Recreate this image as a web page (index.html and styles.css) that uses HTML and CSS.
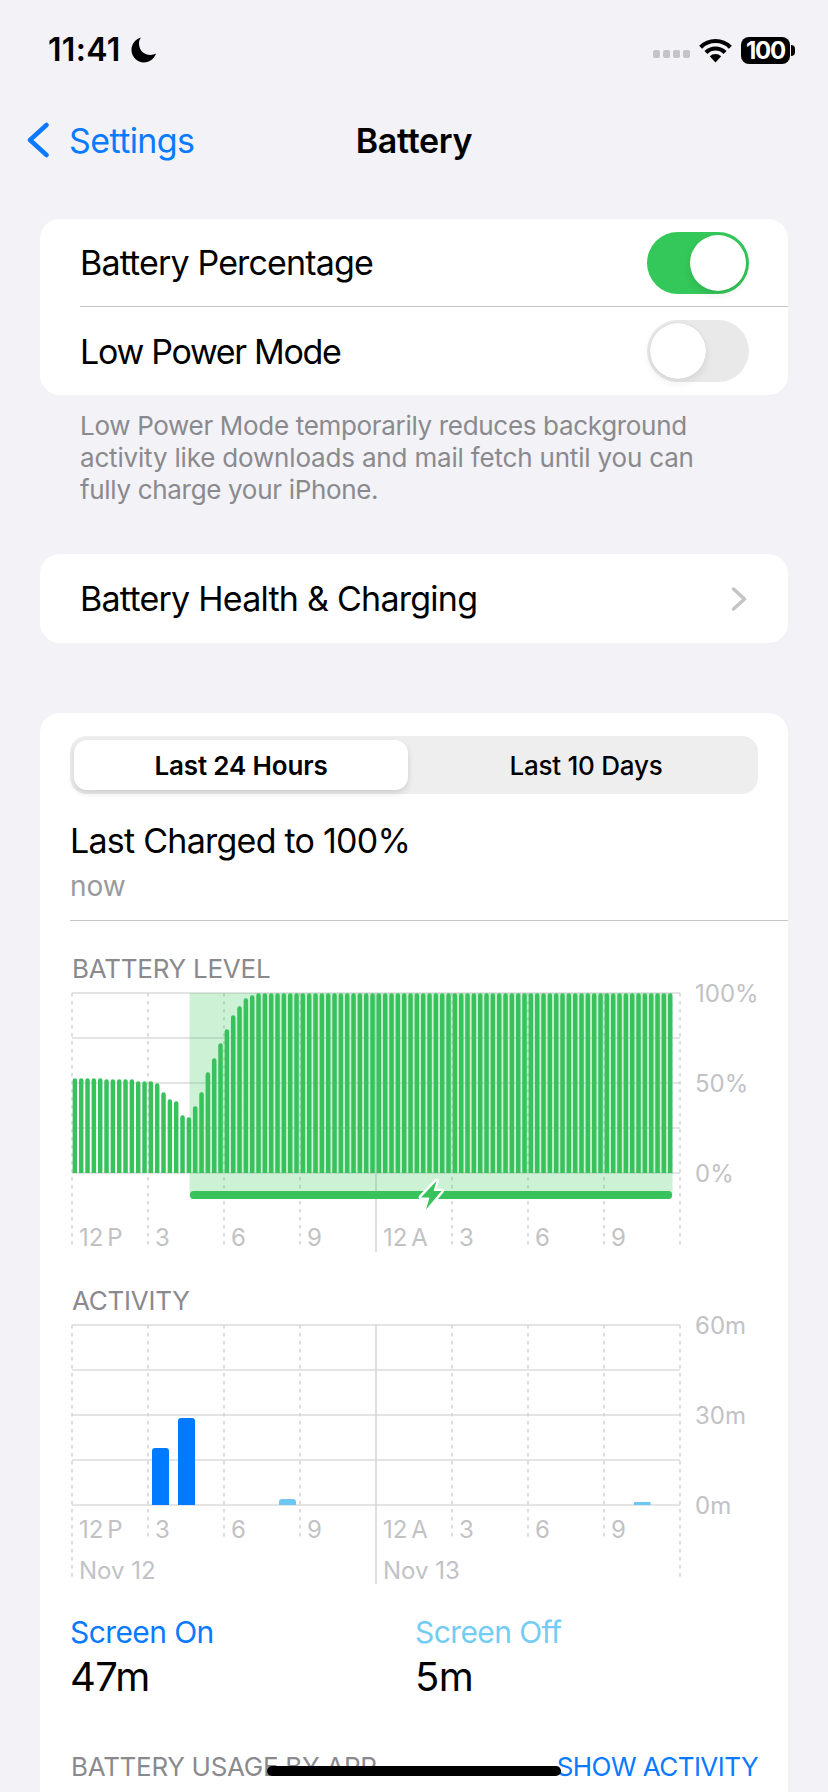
FILE: index.html
```html
<!DOCTYPE html>
<html lang="en">
<head>
<meta charset="utf-8">
<title>Battery</title>
<link rel="stylesheet" href="styles.css">
</head>
<body>
<div class="page">
  <header class="status">
    <div class="status-left">
      <span class="time">11:41</span>
      <svg class="moon" viewBox="0 0 26 26"><path d="M10 .5C4.500 2 .5 7 .5 13c0 6.500 5.500 12.500 12.500 12.500 5.500 0 10-3.500 12-9-1.500.7-3.500 1.500-5.500 1.500C12.500 18 8 13 8 6.500 8 4.300 8.700 2 10 .5z"/></svg>
    </div>
    <div class="status-right">
      <div class="signal"><i></i><i></i><i></i><i></i></div>
      <svg class="wifi" viewBox="0 0 33 25"><path class="wifi-arc" d="M1.650 9.150A21 21 0 0 1 31.350 9.150M6.950 14.450A13.500 13.500 0 0 1 26.050 14.450"/><path d="M16.500 24.500 10.800 18.300A8 8 0 0 1 22.200 18.300z"/></svg>
      <div class="battery"><span class="battery-body">100</span><span class="battery-cap"></span></div>
    </div>
  </header>

  <nav class="nav">
    <a class="back">
      <svg class="back-chevron" viewBox="0 0 24 36"><path d="M20.500 3 4 18 20.500 33"/></svg>
      <span>Settings</span>
    </a>
    <h1 class="nav-title">Battery</h1>
    <span></span>
  </nav>

  <section class="card card-toggles">
    <div class="row row-first">
      <span>Battery Percentage</span>
      <span class="toggle toggle-on"><i class="knob"></i></span>
    </div>
    <div class="row">
      <span class="label-tight">Low Power Mode</span>
      <span class="toggle toggle-off"><i class="knob"></i></span>
    </div>
  </section>
  <p class="note">Low Power Mode temporarily reduces background<br><span class="note-wide">activity like downloads and mail fetch until you can</span><br>fully charge your iPhone.</p>

  <section class="card card-health">
    <div class="row row-link">
      <span class="label-loose">Battery Health &amp; Charging</span>
      <svg class="disclosure" viewBox="0 0 16 24"><path d="M2.500 2 13.500 12 2.500 22"/></svg>
    </div>
  </section>

  <section class="card card-usage">
    <div class="segmented">
      <span class="seg seg-active">Last 24 Hours</span>
      <span class="seg seg-rest">Last 10 Days</span>
    </div>
    <div class="charged">
      <div class="charged-title">Last Charged to 100%</div>
      <div class="charged-sub">now</div>
    </div>

    <h2 class="chart-title chart-title-level">BATTERY LEVEL</h2>
    <div class="chart">
      <svg class="plot plot-level" viewBox="71 981 612 274">
        <g class="hlines"><path d="M72 993H680M72 1038H680M72 1083H680M72 1128H680M72 1173H680"/></g>
        <g class="vdash"><path d="M72 993V1248M148 993V1248M224 993V1248M300 993V1248M452 993V1248M528 993V1248M604 993V1248M680 993V1248"/></g>
        <path class="vsolid" d="M376 993V1252"/>
        <rect class="charge-shade" x="189.500" y="993" width="483" height="204"/>
        <svg x="72" y="990" width="610" height="183" viewBox="72 990 610 183">
          <path class="level-bars" d="M74.870 1080.500V1180M81.200 1080.500V1180M87.530 1080.500V1180M93.870 1080.500V1180M100.200 1080.500V1180M106.530 1081.500V1180M112.870 1081.500V1180M119.200 1081.500V1180M125.530 1081.500V1180M131.870 1081.500V1180M138.200 1083.500V1180M144.530 1083.500V1180M150.870 1083.500V1180M157.200 1085.500V1180M163.530 1094.500V1180M169.870 1101.500V1180M176.200 1103.500V1180M182.530 1117.500V1180M188.870 1119.500V1180M195.200 1108.500V1180M201.530 1094.500V1180M207.870 1074.500V1180M214.200 1060.500V1180M220.530 1045.500V1180M226.870 1031.500V1180M233.200 1017.500V1180M239.530 1008.500V1180M245.870 1000.500V1180M252.200 997.500V1180M258.530 995.500V1180M264.870 995.500V1180M271.200 995.500V1180M277.530 995.500V1180M283.870 995.500V1180M290.200 995.500V1180M296.530 995.500V1180M302.870 995.500V1180M309.200 995.500V1180M315.530 995.500V1180M321.870 995.500V1180M328.200 995.500V1180M334.530 995.500V1180M340.870 995.500V1180M347.200 995.500V1180M353.530 995.500V1180M359.870 995.500V1180M366.200 995.500V1180M372.530 995.500V1180M378.870 995.500V1180M385.200 995.500V1180M391.530 995.500V1180M397.870 995.500V1180M404.200 995.500V1180M410.530 995.500V1180M416.870 995.500V1180M423.200 995.500V1180M429.530 995.500V1180M435.870 995.500V1180M442.200 995.500V1180M448.530 995.500V1180M454.870 995.500V1180M461.200 995.500V1180M467.530 995.500V1180M473.870 995.500V1180M480.200 995.500V1180M486.530 995.500V1180M492.870 995.500V1180M499.200 995.500V1180M505.530 995.500V1180M511.870 995.500V1180M518.200 995.500V1180M524.530 995.500V1180M530.870 995.500V1180M537.200 995.500V1180M543.530 995.500V1180M549.870 995.500V1180M556.200 995.500V1180M562.530 995.500V1180M568.870 995.500V1180M575.200 995.500V1180M581.530 995.500V1180M587.870 995.500V1180M594.200 995.500V1180M600.530 995.500V1180M606.870 995.500V1180M613.200 995.500V1180M619.530 995.500V1180M625.870 995.500V1180M632.200 995.500V1180M638.530 995.500V1180M644.870 995.500V1180M651.200 995.500V1180M657.530 995.500V1180M663.870 995.500V1180M670.200 995.500V1180"/>
        </svg>
        <rect class="charge-bar" x="190" y="1191" width="482" height="8" rx="3.500"/>
        <path class="bolt" d="M436.500 1181 421 1197.500H429.500L426 1209.500 441.500 1191H433.500z"/>
      </svg>
      <div class="xlabels xlabels-level">
        <span>12 P</span><span>3</span><span>6</span><span>9</span><span>12 A</span><span>3</span><span>6</span><span>9</span>
      </div>
      <div class="ylabels"><span>100%</span><span>50%</span><span>0%</span></div>
    </div>

    <h2 class="chart-title chart-title-activity">ACTIVITY</h2>
    <div class="chart">
      <svg class="plot plot-activity" viewBox="71 1313 612 272">
        <g class="hlines"><path d="M72 1325H680M72 1370H680M72 1415H680M72 1460H680M72 1505H680"/></g>
        <g class="vdash"><path d="M72 1325V1580M148 1325V1540M224 1325V1540M300 1325V1540M452 1325V1540M528 1325V1540M604 1325V1540M680 1325V1580"/></g>
        <path class="vsolid" d="M376 1325V1584"/>
        <path class="bar-on" d="M152 1505V1451a3 3 0 0 1 3-3h11a3 3 0 0 1 3 3v54zM178 1505V1421a3 3 0 0 1 3-3h11a3 3 0 0 1 3 3v84z"/>
        <path class="bar-off" d="M279 1505V1502a3 3 0 0 1 3-3h11a3 3 0 0 1 3 3v3zM634 1505V1502h16.500v3z"/>
      </svg>
      <div class="xlabels xlabels-activity">
        <span>12 P</span><span>3</span><span>6</span><span>9</span><span>12 A</span><span>3</span><span>6</span><span>9</span>
        <span class="date">Nov 12</span><span class="date">Nov 13</span>
      </div>
      <div class="ylabels"><span>60m</span><span>30m</span><span>0m</span></div>
    </div>

    <div class="totals">
      <div class="total">
        <div class="total-label label-on">Screen On</div>
        <div class="total-value">47m</div>
      </div>
      <div class="total">
        <div class="total-label label-off">Screen Off</div>
        <div class="total-value">5m</div>
      </div>
    </div>

    <div class="usage-head">
      <span>BATTERY USAGE BY APP</span>
      <span class="show-activity">SHOW ACTIVITY</span>
    </div>
  </section>

  <div class="home-bar"></div>
</div>
</body>
</html>
```
FILE: styles.css
```css
* { box-sizing: border-box; }
html, body { margin: 0; padding: 0; }
body {
  background: #f2f2f7;
  color: #000;
  font-family: Inter, "Noto Sans", sans-serif;
}
.page {
  position: relative;
  width: 828px;
  height: 1792px;
  overflow: hidden;
}

/* status bar */
.status {
  display: flex;
  align-items: center;
  justify-content: space-between;
  height: 100px;
  padding: 0 33px 0 48px;
}
.status-left { display: flex; align-items: center; gap: 10px; }
.time { font-size: 32px; font-weight: 600; letter-spacing: 0.3px; line-height: 40px; }
.moon { width: 26px; height: 26px; }
.status-right { display: flex; align-items: center; }
.signal { display: flex; gap: 2.500px; margin-right: 9px; margin-top: 8px; }
.signal i { width: 7.500px; height: 8px; border-radius: 2px; background: #c4c4c8; }
.wifi { width: 33px; height: 25px; margin-right: 9px; }
.wifi-arc { fill: none; stroke: #000; stroke-width: 4.200; }
.battery { display: flex; align-items: center; }
.battery-body {
  width: 49px; height: 27px;
  background: #000; color: #fff;
  border-radius: 8px;
  font-size: 24px; font-weight: 700; line-height: 27px; letter-spacing: -1.200px;
  text-align: center;
}
.battery-cap { width: 4px; height: 11px; margin-left: 1px; background: #000; border-radius: 0 4px 4px 0; }

/* navigation */
.nav {
  display: grid;
  grid-template-columns: 1fr auto 1fr;
  align-items: center;
  height: 80px;
  padding-left: 26px;
  padding-right: 26px;
}
.back { display: flex; align-items: center; gap: 19px; color: #0a7aff; font-size: 34px; letter-spacing: -0.6px; }
.back-chevron { width: 24px; height: 36px; }
.back-chevron path { fill: none; stroke: #0a7aff; stroke-width: 4.500; stroke-linecap: round; stroke-linejoin: round; }
.nav-title { margin: 0; font-size: 34px; font-weight: 600; letter-spacing: -0.3px; }

/* cards */
.card { background: #fff; border-radius: 20px; margin: 0 40px; }
.card-toggles { margin-top: 39px; }
.row {
  display: flex;
  align-items: center;
  justify-content: space-between;
  height: 88px;
  margin-left: 40px;
  padding-right: 39px;
  font-size: 34px;
  letter-spacing: -0.85px;
}
.label-tight { letter-spacing: -1.300px; }
.label-loose { letter-spacing: -0.75px; }
.row-first { height: 88px; border-bottom: 1px solid #c6c6c8; }
.toggle {
  display: flex;
  align-items: center;
  width: 102px; height: 62px;
  padding: 3px;
  border-radius: 31px;
  background: #e9e9ea;
}
.toggle-on { justify-content: flex-end; background: #34c759; }
.knob {
  width: 56px; height: 56px;
  border-radius: 50%;
  background: #fff;
  box-shadow: 0 4px 10px rgba(0,0,0,.08), 0 1px 2px rgba(0,0,0,.05);
}
.toggle-off .knob { box-shadow: 0 4px 10px rgba(0,0,0,.08), 0 0 1px rgba(0,0,0,.18); }
.note {
  margin: 15px 0 0;
  padding: 0 80px;
  font-size: 26px;
  line-height: 32px;
  color: #8a8a8e;
  letter-spacing: -0.32px;
  white-space: nowrap;
}
.note-wide { letter-spacing: -0.18px; }
.card-health { margin-top: 48px; }
.row-link { height: 89px; padding-right: 41px; }
.disclosure { width: 16px; height: 24px; }
.disclosure path { fill: none; stroke: #c4c4c7; stroke-width: 3.500; stroke-linecap: round; stroke-linejoin: round; }

/* usage card */
.card-usage { margin-top: 70px; padding: 23px 0 40px 30px; }
.segmented {
  display: flex;
  width: 688px; height: 58px;
  padding: 4px;
  border-radius: 16px;
  background: #eeeeef;
}
.seg {
  display: flex;
  align-items: center;
  justify-content: center;
  flex: 1;
  font-size: 26px;
  font-weight: 500;
  letter-spacing: -0.25px;
}
.seg-rest { padding-left: 10px; }
.seg-active {
  flex: 0 0 334px;
  background: #fff;
  border-radius: 13px;
  font-weight: 600;
  letter-spacing: -0.15px;
  box-shadow: 0 3px 6px rgba(0,0,0,.14);
}
.charged { padding-top: 26px; padding-bottom: 18px; border-bottom: 1px solid #c6c6c8; }
.charged-title { font-size: 34px; line-height: 41px; letter-spacing: -0.75px; }
.charged-sub { margin-top: 9px; font-size: 28px; line-height: 32px; color: #9a9a9e; }

.chart-title {
  margin: 0;
  font-size: 26px;
  font-weight: 400;
  line-height: 24px;
  color: #8a8a8e;
  padding-left: 2px;
  letter-spacing: -0.25px;
}
.chart-title-level { margin-top: 36px; }
.chart-title-activity { margin-top: 34px; }

.chart {
  display: grid;
  grid-template-columns: 624px 70px;
  margin-left: 1px;
  font-size: 24px;
  color: #c2c2c6;
}
.plot { grid-area: 1 / 1; display: block; width: 612px; }
.plot-level { height: 274px; }
.plot-activity { height: 272px; }
.hlines path { fill: none; stroke: #dcdcde; stroke-width: 1.500; }
.vdash path { fill: none; stroke: #d2d2d5; stroke-width: 1.500; stroke-dasharray: 3.500 4.500; }
.vsolid { fill: none; stroke: #d4d4d6; stroke-width: 1.500; }
.charge-shade { fill: rgba(52,199,89,.25); }
.level-bars { fill: none; stroke: #37c25b; stroke-width: 4.500; stroke-linecap: round; }
.charge-bar { fill: #37c25b; }
.bolt { fill: #37c25b; stroke: #fff; stroke-width: 5; stroke-linejoin: round; paint-order: stroke; }
.bar-on { fill: #007aff; }
.bar-off { fill: #6cc8f2; }
.xlabels {
  grid-area: 1 / 1;
  align-self: start;
  display: grid;
  grid-template-columns: repeat(8, 76px);
  margin-left: 1px;
  line-height: 24px;
  word-spacing: -3px;
}
.xlabels span { padding-left: 7px; white-space: nowrap; }
.xlabels-level { margin-top: 245px; }
.xlabels-activity { margin-top: 205px; row-gap: 17px; }
.xlabels .date { grid-column: span 4; word-spacing: 0; }
.ylabels {
  grid-area: 1 / 2;
  align-self: start;
  display: flex;
  flex-direction: column;
  justify-content: space-between;
  height: 205px;
  padding-top: 1px;
  line-height: 24px;
  white-space: nowrap;
}
.ylabels span { display: block; }

.totals { display: grid; grid-template-columns: 345px 1fr; margin-top: 30px; }
.total-label { font-size: 30px; line-height: 34px; letter-spacing: -0.6px; }
.label-on { color: #0a7aff; }
.label-off { color: #72cdf4; }
.total-value { margin-top: 5px; font-size: 40px; line-height: 46px; letter-spacing: -0.6px; }

.usage-head {
  display: flex;
  justify-content: space-between;
  width: 688px;
  margin-top: 55px;
  font-size: 26px;
  line-height: 24px;
  letter-spacing: -0.3px;
  color: #8a8a8e;
  padding-left: 1px;
}
.show-activity { color: #0a7aff; letter-spacing: -0.55px; }

/* overlay */
.home-bar {
  position: absolute;
  left: 267px;
  top: 1766px;
  width: 294px;
  height: 10px;
  border-radius: 5px;
  background: #000;
}
```
